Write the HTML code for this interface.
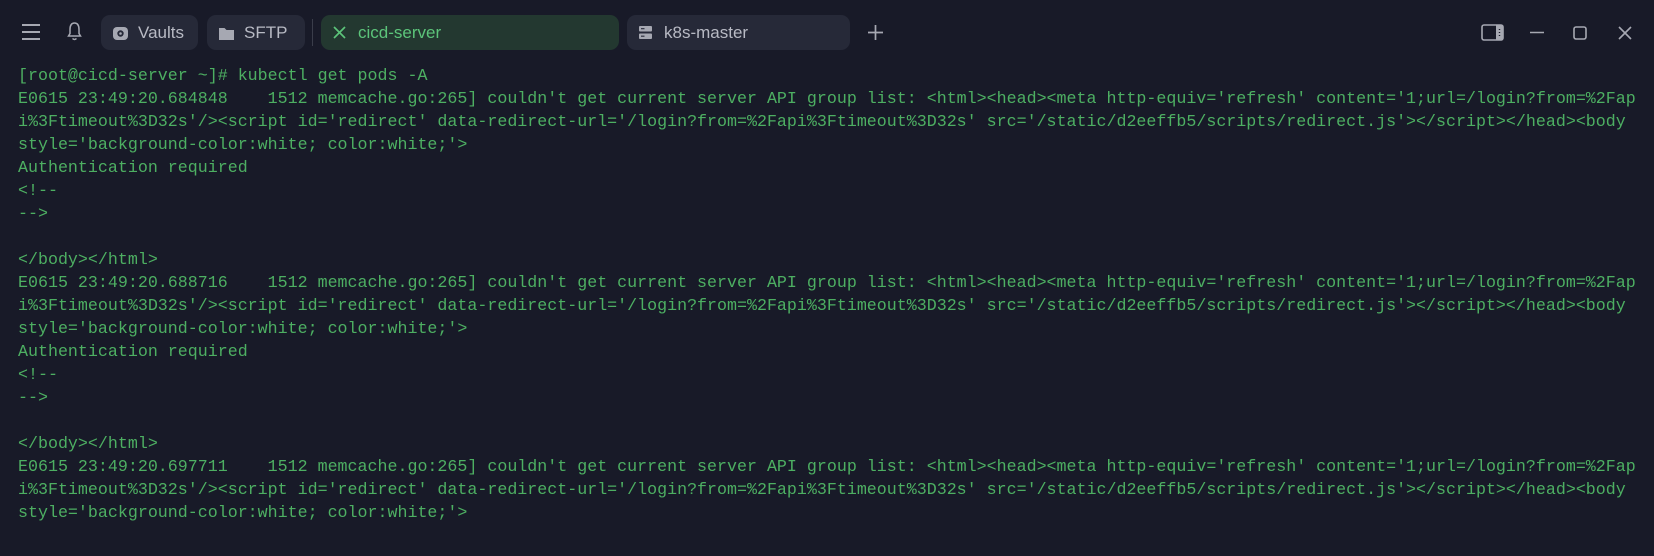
<!DOCTYPE html>
<html><head><meta charset="utf-8"><style>
html,body{margin:0;padding:0;width:1654px;height:556px;background:#181a28;overflow:hidden}
body{position:relative;font-family:"Liberation Sans",sans-serif}
.tab{position:absolute;top:15px;height:35px;border-radius:9px;background:#262938;color:#b8bac4;font-size:17px;line-height:35px}
.tab span{position:absolute;top:0}
.term{position:absolute;left:18px;top:64px;font-family:"Liberation Mono",monospace;font-size:16.65px;line-height:23px;color:#4daf62;white-space:pre}
svg{position:absolute}
</style></head><body>
<svg style="left:21px;top:23px" width="20" height="18"><path d="M1 2H19M1 9H19M1 16H19" stroke="#a6a8b2" stroke-width="2"/></svg>
<svg style="left:66px;top:21px" width="17" height="21"><path d="M8.5 2C5 2 4 5 4 8.5V12.5L2.5 15H14.5L13 12.5V8.5C13 5 12 2 8.5 2ZM6.5 17.5Q8.5 19.5 10.5 17.5" fill="none" stroke="#a6a8b2" stroke-width="1.5"/></svg>
<div class="tab" style="left:101px;width:97px"><svg style="left:11px;top:10px" width="17" height="17"><rect x="1" y="2" width="15" height="13" rx="4" fill="#a6a8b2"/><circle cx="8.5" cy="8.5" r="3.2" fill="#262938"/><circle cx="8.5" cy="8.5" r="1.3" fill="#a6a8b2"/></svg><span style="left:37px">Vaults</span></div>
<div class="tab" style="left:207px;width:98px"><svg style="left:11px;top:11px" width="17" height="15"><path d="M1 2H6.5L8.5 4H16V14H1Z" fill="#a6a8b2"/></svg><span style="left:37px">SFTP</span></div>
<div style="position:absolute;left:312px;top:19px;width:1px;height:27px;background:#3a3d4a"></div>
<div class="tab" style="left:321px;width:298px;background:#233830;color:#5cc47a"><svg style="left:12px;top:11px" width="13" height="13"><path d="M1 1L12 12M12 1L1 12" stroke="#5cc47a" stroke-width="1.7"/></svg><span style="left:37px">cicd-server</span></div>
<div class="tab" style="left:627px;width:223px"><svg style="left:11px;top:10px" width="15" height="15"><rect x="1" y="1" width="13" height="5.5" rx="1" fill="#a6a8b2"/><rect x="1" y="8.5" width="13" height="5.5" rx="1" fill="#a6a8b2"/><path d="M3 3.7H6.5M3 11.2H6.5" stroke="#262938" stroke-width="1.2"/></svg><span style="left:37px">k8s-master</span></div>
<svg style="left:867px;top:24px" width="17" height="17"><path d="M8.5 1V16M1 8.5H16" stroke="#a6a8b2" stroke-width="1.7"/></svg>
<svg style="left:1481px;top:24px" width="24" height="18"><rect x="1" y="1" width="21" height="15" rx="2" fill="none" stroke="#a6a8b2" stroke-width="1.6"/><rect x="15" y="1" width="7" height="15" fill="#a6a8b2"/><path d="M18.5 5V6M18.5 8V9M18.5 11V12" stroke="#181a28" stroke-width="1.4"/></svg>
<svg style="left:1530px;top:31px" width="14" height="3"><path d="M0 1.5H14" stroke="#a6a8b2" stroke-width="1.5"/></svg>
<svg style="left:1573px;top:26px" width="14" height="14"><rect x="1" y="1" width="12" height="12" rx="2" fill="none" stroke="#a6a8b2" stroke-width="1.6"/></svg>
<svg style="left:1618px;top:26px" width="14" height="14"><path d="M1 1L13 13M13 1L1 13" stroke="#a6a8b2" stroke-width="1.6"/></svg>
<div class="term">[root@cicd-server ~]# kubectl get pods -A
E0615 23:49:20.684848    1512 memcache.go:265] couldn't get current server API group list: &lt;html&gt;&lt;head&gt;&lt;meta http-equiv='refresh' content='1;url=/login?from=%2Fap
i%3Ftimeout%3D32s'/&gt;&lt;script id='redirect' data-redirect-url='/login?from=%2Fapi%3Ftimeout%3D32s' src='/static/d2eeffb5/scripts/redirect.js'&gt;&lt;/script&gt;&lt;/head&gt;&lt;body
style='background-color:white; color:white;'&gt;
Authentication required
&lt;!--
--&gt;

&lt;/body&gt;&lt;/html&gt;
E0615 23:49:20.688716    1512 memcache.go:265] couldn't get current server API group list: &lt;html&gt;&lt;head&gt;&lt;meta http-equiv='refresh' content='1;url=/login?from=%2Fap
i%3Ftimeout%3D32s'/&gt;&lt;script id='redirect' data-redirect-url='/login?from=%2Fapi%3Ftimeout%3D32s' src='/static/d2eeffb5/scripts/redirect.js'&gt;&lt;/script&gt;&lt;/head&gt;&lt;body
style='background-color:white; color:white;'&gt;
Authentication required
&lt;!--
--&gt;

&lt;/body&gt;&lt;/html&gt;
E0615 23:49:20.697711    1512 memcache.go:265] couldn't get current server API group list: &lt;html&gt;&lt;head&gt;&lt;meta http-equiv='refresh' content='1;url=/login?from=%2Fap
i%3Ftimeout%3D32s'/&gt;&lt;script id='redirect' data-redirect-url='/login?from=%2Fapi%3Ftimeout%3D32s' src='/static/d2eeffb5/scripts/redirect.js'&gt;&lt;/script&gt;&lt;/head&gt;&lt;body
style='background-color:white; color:white;'&gt;</div>
</body></html>
